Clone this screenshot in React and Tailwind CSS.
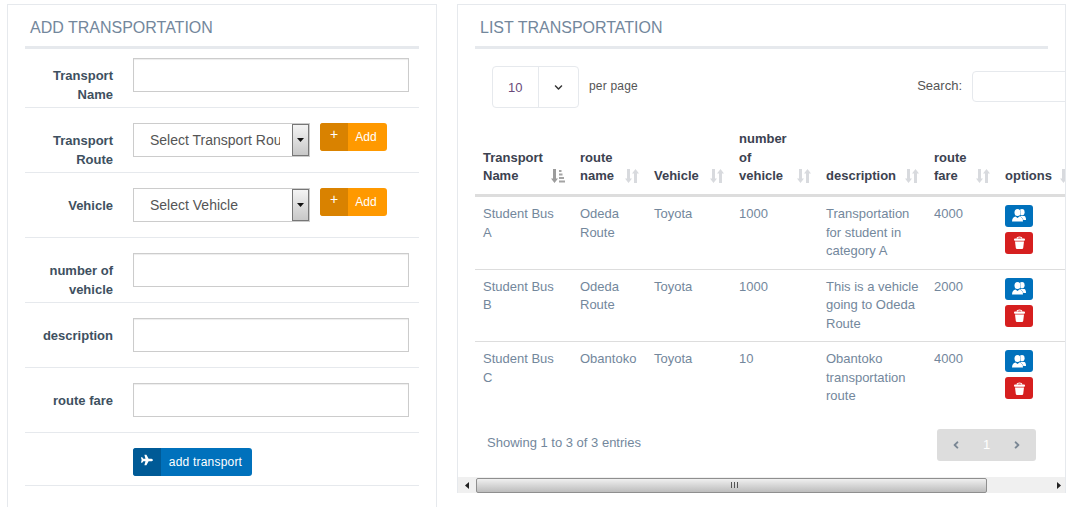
import { FaPlane, FaChevronDown, FaAngleLeft, FaAngleRight } from "react-icons/fa";

const rows = [
  {
    name: "Student Bus A",
    route: "Odeda Route",
    vehicle: "Toyota",
    count: "1000",
    description: "Transportation for student in category A",
    fare: "4000",
  },
  {
    name: "Student Bus B",
    route: "Odeda Route",
    vehicle: "Toyota",
    count: "1000",
    description: "This is a vehicle going to Odeda Route",
    fare: "2000",
  },
  {
    name: "Student Bus C",
    route: "Obantoko",
    vehicle: "Toyota",
    count: "10",
    description: "Obantoko transportation route",
    fare: "4000",
  },
];

const columns = [
  { label: "Transport Name", width: "w-[97px]", active: true },
  { label: "route name", width: "w-[74px]" },
  { label: "Vehicle", width: "w-[85px]" },
  { label: "number of vehicle", width: "w-[87px]" },
  { label: "description", width: "w-[108px]" },
  { label: "route fare", width: "w-[71px]" },
  { label: "options", width: "w-[84px]" },
];

function SortIcon({ active }) {
  return (
    <svg width="14" height="14" viewBox="0 0 14 14" className="absolute bottom-[11px] right-[7px]">
      <path d="M2 0h3v9.500h2L3.500 14 0 9.500h2z" fill={active ? "#9c9c9c" : "#d8dade"} />
      {active ? (
        <path d="M8 1h2.500v2H8zM8 4.500h3.500v2H8zM8 8h5v2H8zM8 11.500h6v2H8z" fill="#a4a4a4" />
      ) : (
        <path d="M10.500 0L14 4.500h-2V14H9V4.500H7z" fill="#d8dade" />
      )}
    </svg>
  );
}

function UsersIcon() {
  return (
    <svg width="14" height="13" viewBox="0 0 14 13">
      <ellipse cx="10" cy="3.200" rx="2.600" ry="3.100" fill="#fff" />
      <path d="M7 7h5.500C13.500 7.500 14 9 14 11H10z" fill="#fff" />
      <ellipse cx="5.500" cy="3.600" rx="3" ry="3.500" fill="#fff" stroke="#0071bc" strokeWidth="0.800" paintOrder="stroke" />
      <path
        d="M0 12.500C0 9.500 1.500 8 3.500 7.500L5.500 9l2-1.500c2 .5 3.500 2 3.500 5z"
        fill="#fff"
        stroke="#0071bc"
        strokeWidth="0.800"
        paintOrder="stroke"
      />
    </svg>
  );
}

function TrashIcon() {
  return (
    <svg width="11" height="13" viewBox="0 0 11 13">
      <path d="M3 2.500C3.500 .5 7.500 .5 8 2.500" fill="none" stroke="#fff" strokeWidth="1.200" />
      <rect x="0" y="2.500" width="11" height="2.200" rx="1" fill="#fff" />
      <path d="M1 5.500h9l-.8 6.500c-.1.600-.5 1-1.200 1H3c-.7 0-1.100-.4-1.200-1z" fill="#fff" />
    </svg>
  );
}

function FormRow({ label, children, first }) {
  return (
    <div className={`flex border-b border-[#e6e9ed] ${first ? "h-[59px] pt-[9px]" : "h-[65px] pt-[15px]"}`}>
      <label className="w-[88px] shrink-0 pt-[9px] text-right text-[13px] leading-[18.57px] font-bold text-[#3e5060]">
        {label}
      </label>
      <div className="ml-5 flex items-start">{children}</div>
    </div>
  );
}

function TextInput() {
  return <input className="h-[34px] w-[276px] border border-[#ccc] bg-white shadow-[inset_0_1px_1px_rgba(0,0,0,0.075)] outline-none" />;
}

function NativeSelect({ text }) {
  return (
    <div className="flex h-[34px] w-[177px] border border-[#ccc] bg-white">
      <div className="w-[146px] overflow-hidden pl-4 text-[14px] leading-[32px] whitespace-nowrap text-[#555]">
        {text}
      </div>
      <div className="ml-auto flex w-[17px] items-center justify-center border border-[#777] bg-gradient-to-b from-[#f4f4f4] to-[#c8c8c8]">
        <svg width="7" height="4" viewBox="0 0 7 4">
          <path d="M0 0h7L3.500 4z" fill="#111" />
        </svg>
      </div>
    </div>
  );
}

function AddButton() {
  return (
    <button className="ml-[10px] flex h-7 w-[67px] overflow-hidden rounded-[3px] bg-[#ff9900] text-[12px] text-white">
      <span className="flex h-full w-7 items-start justify-center bg-[#d98200] pt-[2px] text-[14px] leading-[18px]">+</span>
      <span className="flex-1 pt-[6px] pr-[3px] leading-[17px]">Add</span>
    </button>
  );
}

export default function App() {
  return (
    <div
      className="flex h-[507px] w-[1089px] items-start gap-5 overflow-hidden bg-white pt-1 pl-[7px] text-[13px] leading-[18.57px] text-[#73879c]"
      style={{ fontFamily: '"Liberation Sans", Arial, sans-serif' }}
    >
      {/* add form */}
      <section className="h-[520px] w-[430px] shrink-0 border border-[#e6e9ed] px-[17px]">
        <h2 className="h-[44px] border-b-[3px] border-[#e6e9ed] pt-[12px] pl-[5px] text-[16px] leading-[22px] font-normal text-[#73879c]">
          ADD TRANSPORTATION
        </h2>
        <FormRow first label="Transport Name">
          <TextInput />
        </FormRow>
        <FormRow label="Transport Route">
          <NativeSelect text="Select Transport Route" />
          <AddButton />
        </FormRow>
        <FormRow label="Vehicle">
          <NativeSelect text="Select Vehicle" />
          <AddButton />
        </FormRow>
        <FormRow label="number of vehicle">
          <TextInput />
        </FormRow>
        <FormRow label="description">
          <TextInput />
        </FormRow>
        <FormRow label="route fare">
          <TextInput />
        </FormRow>
        <div className="h-[53px] border-b border-[#e6e9ed] pt-[15px] pl-[108px]">
          <button className="flex h-7 w-[119px] overflow-hidden rounded-[3px] bg-[#0071bc] text-[12px] tracking-[0.2px] text-white">
            <span className="flex h-full w-7 items-start justify-center bg-[#005a96] pt-[6px]">
              <FaPlane size={12} />
            </span>
            <span className="flex-1 pt-[6px] pr-[2px] leading-[17px]">add transport</span>
          </button>
        </div>
      </section>

      {/* transport list */}
      <section className="flex h-[489px] w-[609px] shrink-0 flex-col overflow-hidden border-t border-r border-l border-[#e6e9ed]">
        <div className="mx-[17px] w-[573px] shrink-0">
          <h2 className="h-[44px] border-b-[3px] border-[#e6e9ed] pt-[12px] pl-[5px] text-[16px] leading-[22px] font-normal text-[#73879c]">
            LIST TRANSPORTATION
          </h2>
        </div>

        <div className="min-h-0 flex-1 overflow-hidden pl-[17px]">
          <div className="flex h-[73.3px] w-[607px] items-start pt-[17px] pl-[17px]">
            <div className="flex h-[42px] w-[87px] rounded-[4px] border border-[#e6e9ed]">
              <span className="w-[46px] border-r border-[#e6e9ed] pt-[12px] pl-[15px] text-[#6a4a7a]">10</span>
              <span className="flex flex-1 items-center justify-center text-[#333]">
                <FaChevronDown size={9} />
              </span>
            </div>
            <span className="ml-[10px] pt-[11px] text-[12px] tracking-[0.2px] text-[#555]">per page</span>
            <span className="ml-auto pt-[11px] text-[13px] text-[#555]">Search:</span>
            <input className="mt-[5px] ml-[10px] h-[31px] w-[110px] shrink-0 rounded-[4px] border border-[#e6e9ed] outline-none" />
          </div>

          <table className="w-[606px] table-fixed border-collapse">
            <thead>
              <tr className="border-b-[3px] border-[#ddd]">
                {columns.map((col) => (
                  <th key={col.label} className={`relative ${col.width} px-2 pt-2 pb-2 pr-7 text-left align-bottom font-bold text-[#3c4250]`}>
                    {col.label}
                    <SortIcon active={col.active} />
                  </th>
                ))}
              </tr>
            </thead>
            <tbody>
              {rows.map((row) => (
                <tr key={row.name} className="border-b border-[#ddd] align-top last:border-b-0">
                  <td className="p-2">{row.name}</td>
                  <td className="p-2">{row.route}</td>
                  <td className="p-2">{row.vehicle}</td>
                  <td className="p-2">{row.count}</td>
                  <td className="py-2 pr-0 pl-2">{row.description}</td>
                  <td className="p-2">{row.fare}</td>
                  <td className="p-2">
                    <div className="flex flex-col items-start gap-[5px]">
                      <button className="flex h-[22px] w-7 items-center justify-center rounded-[3px] bg-[#0071bc]">
                        <UsersIcon />
                      </button>
                      <button className="flex h-[22px] w-7 items-center justify-center rounded-[3px] bg-[#d61f1f]">
                        <TrashIcon />
                      </button>
                    </div>
                  </td>
                </tr>
              ))}
            </tbody>
          </table>

          <div className="flex items-start justify-between pt-[15px] pr-[29px] pl-3">
            <span className="pt-[5px]">Showing 1 to 3 of 3 entries</span>
            <div className="flex h-8 w-[99px] items-center justify-between rounded-[3px] bg-[#ddd] px-[13px] text-[#7a8794]">
              <FaAngleLeft size={12} />
              <span className="text-white">1</span>
              <FaAngleRight size={12} />
            </div>
          </div>
        </div>

        {/* horizontal scrollbar */}
        <div className="flex h-[16px] shrink-0 items-center bg-[#f0f0f0]">
          <div className="flex w-[18px] shrink-0 items-center justify-center">
            <svg width="4" height="7" viewBox="0 0 4 7">
              <path d="M4 0v7L0 3.500z" fill="#222" />
            </svg>
          </div>
          <div className="flex h-[15px] w-[511px] items-center justify-center rounded-[2px] border border-[#8f8f8f] bg-gradient-to-b from-[#f0f0f0] to-[#bdbdbd]">
            <div className="ml-[6px] h-[6px] w-[7px] border-x border-[#555] bg-[linear-gradient(90deg,transparent_2px,#555_2px,#555_3px,transparent_3px)]" />
          </div>
          <div className="ml-auto flex w-[13px] shrink-0 items-center justify-center">
            <svg width="4" height="7" viewBox="0 0 4 7">
              <path d="M0 0v7l4-3.500z" fill="#222" />
            </svg>
          </div>
        </div>
      </section>
    </div>
  );
}
